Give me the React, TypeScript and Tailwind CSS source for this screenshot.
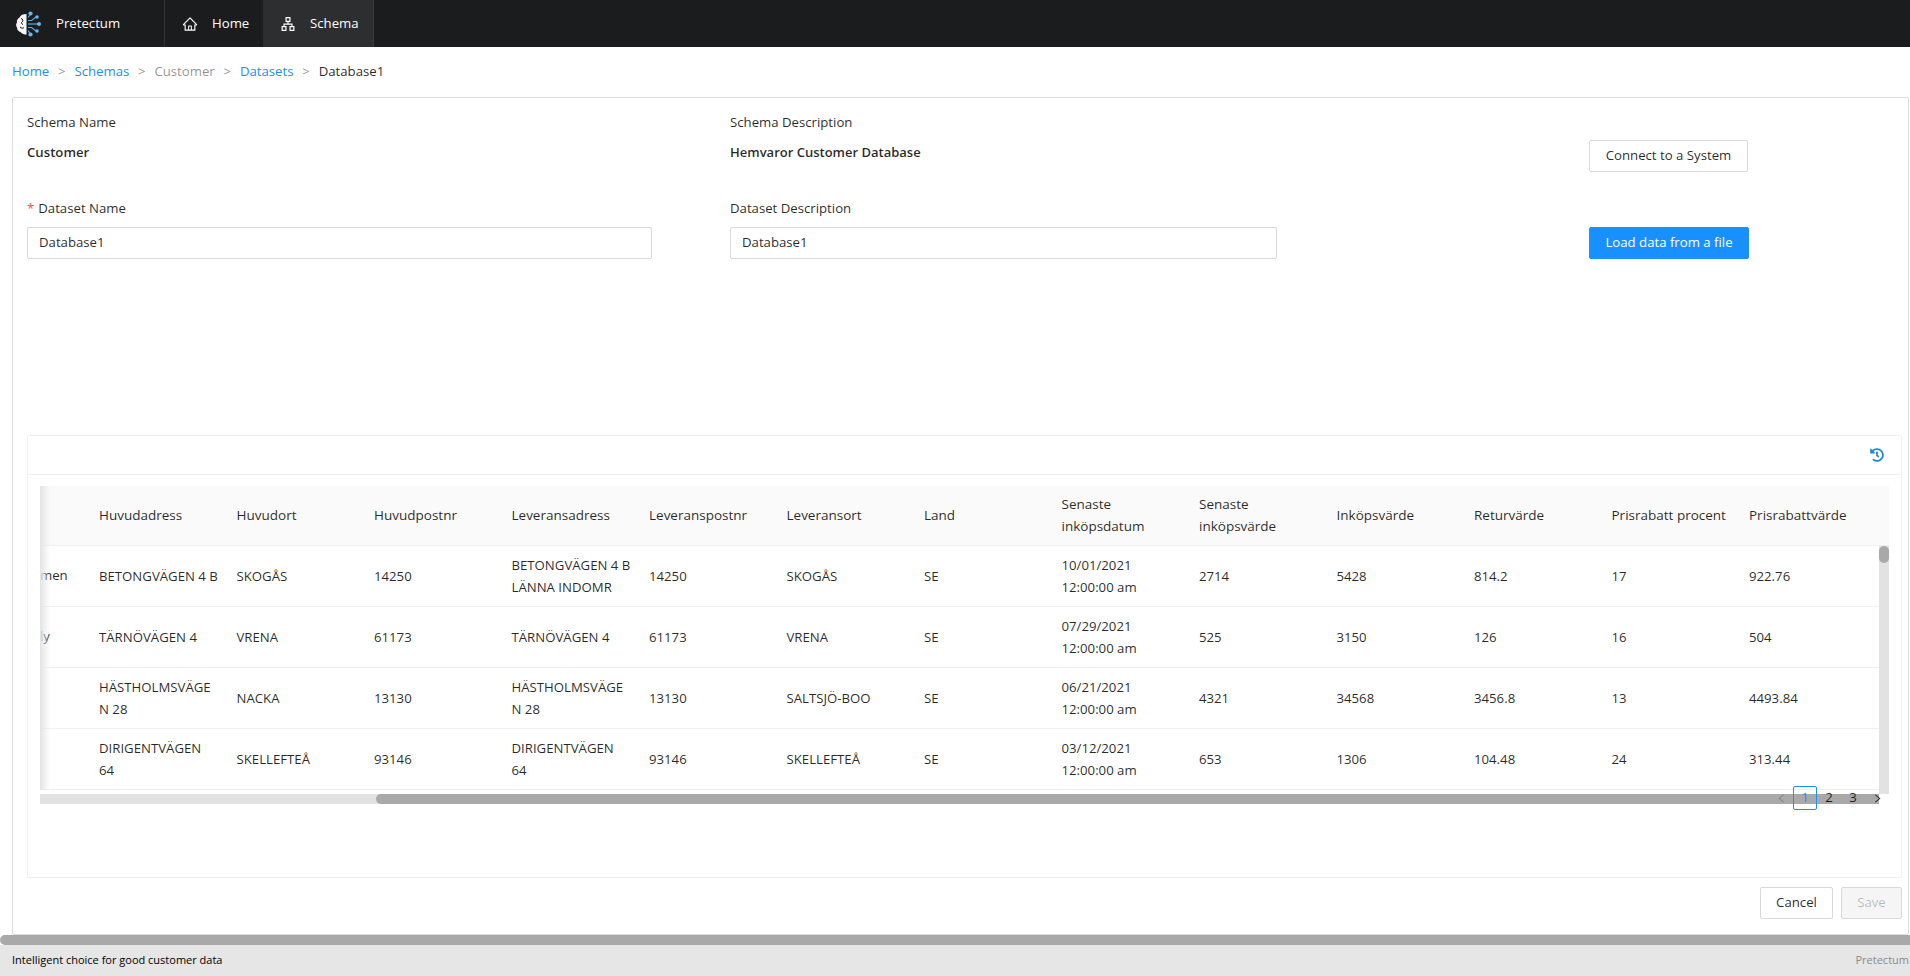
import type { ReactNode } from "react";
import { AiOutlineHome, AiOutlineApartment, AiOutlineLeft, AiOutlineRight } from "react-icons/ai";
import { FaHistory } from "react-icons/fa";

const headers = [
  "Huvudadress",
  "Huvudort",
  "Huvudpostnr",
  "Leveransadress",
  "Leveranspostnr",
  "Leveransort",
  "Land",
  "Senaste\ninköpsdatum",
  "Senaste\ninköpsvärde",
  "Inköpsvärde",
  "Returvärde",
  "Prisrabatt procent",
  "Prisrabattvärde",
];

const rows = [
  ["men", "BETONGVÄGEN 4 B", "SKOGÅS", "14250", "BETONGVÄGEN 4 B\nLÄNNA INDOMR", "14250", "SKOGÅS", "SE", "10/01/2021\n12:00:00 am", "2714", "5428", "814.2", "17", "922.76"],
  ["ly", "TÄRNÖVÄGEN 4", "VRENA", "61173", "TÄRNÖVÄGEN 4", "61173", "VRENA", "SE", "07/29/2021\n12:00:00 am", "525", "3150", "126", "16", "504"],
  ["", "HÄSTHOLMSVÄGE\nN 28", "NACKA", "13130", "HÄSTHOLMSVÄGE\nN 28", "13130", "SALTSJÖ-BOO", "SE", "06/21/2021\n12:00:00 am", "4321", "34568", "3456.8", "13", "4493.84"],
  ["", "DIRIGENTVÄGEN\n64", "SKELLEFTEÅ", "93146", "DIRIGENTVÄGEN\n64", "93146", "SKELLEFTEÅ", "SE", "03/12/2021\n12:00:00 am", "653", "1306", "104.48", "24", "313.44"],
];

function Logo() {
  return (
    <svg width="26" height="26" viewBox="0 0 26 26" className="shrink-0">
      <path d="M11.5 3 C8 3 5.5 4 4.5 6.5 C2.5 7.5 1.5 9.5 2 11.5 C0.8 13 0.8 15 2 16.5 C2 19 3.8 20.5 5.5 21 C7 23 9.5 23.5 11.5 23.5 Z" fill="#f6f6f6" />
      <path d="M6 7.5 C8 8 8.5 10 7 11 C6 11.7 6.5 13 8 13.5 M5 16 C6.5 17.5 8 17.5 9 16.5" stroke="#1b1c1e" strokeWidth="1" fill="none" />
      <g stroke="#5aa9e0" strokeWidth="1.2" fill="none">
        <path d="M13 13 H23" />
        <path d="M13 9.5 H16.5 L21 6" />
        <path d="M13 16.5 H16.5 L21 20" />
        <path d="M13 6.5 L15.5 3" />
        <path d="M13 19.5 L15.5 23" />
      </g>
      <g fill="#6bb6ea">
        <circle cx="15.5" cy="2.5" r="2.1" />
        <circle cx="22" cy="6" r="1.8" />
        <circle cx="24" cy="13" r="2" />
        <circle cx="22" cy="20" r="1.8" />
        <circle cx="15.5" cy="23.5" r="2.1" />
      </g>
    </svg>
  );
}

function Cell({ children }: { children?: ReactNode }) {
  return <div className="w-[137.5px] shrink-0 whitespace-pre-line leading-[22px]">{children}</div>;
}

function Btn({ children, cls }: { children: ReactNode; cls: string }) {
  return <button className={`h-8 rounded-[2px] border text-[13.2px] ${cls}`}>{children}</button>;
}

function Sep() {
  return <span className="mx-[8.8px]">&gt;</span>;
}

export default function App() {
  return (
    <div className="h-[976px] w-[1910px] overflow-hidden bg-white flex flex-col text-[13.2px] text-[#000000d9] font-['Open_Sans','Noto_Sans',sans-serif]">
      <header className="h-[47px] shrink-0 bg-[#1b1c1e] flex items-stretch text-white">
        <div className="w-[165px] flex items-center pl-[15px] gap-[15px] border-r border-[#333436]">
          <Logo />
          <span>Pretectum</span>
        </div>
        <div className="w-[98px] flex items-center pl-[17px] gap-[14px]">
          <AiOutlineHome className="text-[16px]" />
          <span>Home</span>
        </div>
        <div className="w-[111px] flex items-center pl-[17px] gap-[14px] bg-[#2d2e30] border-r border-[#3a3b3d]">
          <AiOutlineApartment className="text-[16px]" />
          <span>Schema</span>
        </div>
      </header>

      <nav className="h-[50px] shrink-0 flex items-center pl-[12px] text-[#00000073]">
        <span className="text-[#1890ff]">Home</span>
        <Sep />
        <span className="text-[#1890ff]">Schemas</span>
        <Sep />
        <span>Customer</span>
        <Sep />
        <span className="text-[#1890ff]">Datasets</span>
        <Sep />
        <span className="text-[#000000d9]">Database1</span>
      </nav>

      <main className="ml-[12px] mr-[1px] h-[838px] shrink-0 border border-[#dddddd] rounded-[2px] flex flex-col pl-[14px] pr-[6px] pt-[13px]">
        <div className="grid grid-cols-[703px_859px_1fr] h-[324px] content-start">
          <div className="flex flex-col">
            <div className="h-[22px] leading-[22px]">Schema Name</div>
            <div className="h-[22px] leading-[22px] mt-[8px] font-semibold">Customer</div>
          </div>
          <div className="flex flex-col">
            <div className="h-[22px] leading-[22px]">Schema Description</div>
            <div className="h-[22px] leading-[22px] mt-[8px] font-semibold text-[13px]">Hemvaror Customer Database</div>
          </div>
          <div className="pt-[29px]">
            <Btn cls="w-[159px] bg-white border-[#d9d9d9]">Connect to a System</Btn>
          </div>

          <div className="mt-[25px] flex flex-col">
            <div className="h-[22px] leading-[22px]"><span className="text-[#ff4d4f] mr-[4px]">*</span>Dataset Name</div>
            <div className="mt-[8px] h-[32px] w-[625px] border border-[#d9d9d9] rounded-[2px] px-[11px] flex items-center">Database1</div>
          </div>
          <div className="mt-[25px] flex flex-col">
            <div className="h-[22px] leading-[22px]">Dataset Description</div>
            <div className="mt-[8px] h-[32px] w-[547px] border border-[#d9d9d9] rounded-[2px] px-[11px] flex items-center">Database1</div>
          </div>
          <div className="mt-[55px]">
            <Btn cls="w-[160px] bg-[#1890ff] border-[#1890ff] text-white">Load data from a file</Btn>
          </div>
        </div>

        <section className="h-[443px] shrink-0 border border-[#f0f0f0] rounded-[2px] flex flex-col relative">
          <div className="h-[39px] shrink-0 border-b border-[#f0f0f0] flex items-center justify-end pr-[17px]">
            <FaHistory className="text-[14px] text-[#1c86d8]" />
          </div>
          <div className="mt-[11px] ml-[12px] w-[1849px] relative">
            <div className="h-[60px] bg-[#fafafa] border-b border-[#f0f0f0] flex items-center font-medium text-[13.5px] pb-[2px]">
              <div className="w-[59px] shrink-0" />
              {headers.map((h) => (
                <Cell key={h}>{h}</Cell>
              ))}
            </div>
            <div className="relative h-[248px] overflow-hidden">
              {rows.map((r, i) => (
                <div key={i} className="h-[61px] border-b border-[#f0f0f0] flex items-center overflow-hidden">
                  {r.map((c, j) =>
                    j === 0 ? (
                      <div key={j} className="w-[59px] shrink-0">{c}</div>
                    ) : (
                      <Cell key={j}>{c}</Cell>
                    )
                  )}
                </div>
              ))}
              <div className="absolute right-0 top-0 bottom-0 w-[10px] bg-[#e2e2e2]">
                <div className="h-[17px] bg-[#a9a9a9] rounded-[5px]" />
              </div>
            </div>
            <div className="absolute left-0 top-0 w-[10px] h-[304px] bg-gradient-to-r from-[#e4e4e4] to-transparent" />
            <div className="h-[10px] w-[1839px] bg-[#e2e2e2]">
              <div className="ml-[336px] h-full bg-[#a9a9a9] rounded-l-[5px]" />
            </div>
            <div className="absolute right-[0px] top-[300px] flex items-center h-[24px] text-[#000000d9]">
              <span className="w-[24px] flex justify-center text-[#00000040]"><AiOutlineLeft className="text-[11px]" /></span>
              <span className="w-[24px] h-[24px] border border-[#1890ff] rounded-[2px] text-[#1890ff] flex items-center justify-center">1</span>
              <span className="w-[24px] text-center">2</span>
              <span className="w-[24px] text-center">3</span>
              <span className="w-[24px] flex justify-center"><AiOutlineRight className="text-[11px]" /></span>
            </div>
          </div>
        </section>

        <div className="mt-[9px] flex justify-end gap-[8px]">
          <Btn cls="w-[73px] bg-white border-[#d9d9d9]">Cancel</Btn>
          <Btn cls="w-[61px] bg-[#f5f5f5] border-[#d9d9d9] text-[#00000040]">Save</Btn>
        </div>
      </main>

      <div className="h-[10px] shrink-0 bg-[#a9a9a9] rounded-l-[5px]" />
      <footer className="h-[31px] shrink-0 bg-[#e6e6e6] flex items-center justify-between pl-[12px] pr-[1px] text-[11px]">
        <span className="text-black">Intelligent choice for good customer data</span>
        <span className="text-[#8a8a8a]">Pretectum</span>
      </footer>
    </div>
  );
}
